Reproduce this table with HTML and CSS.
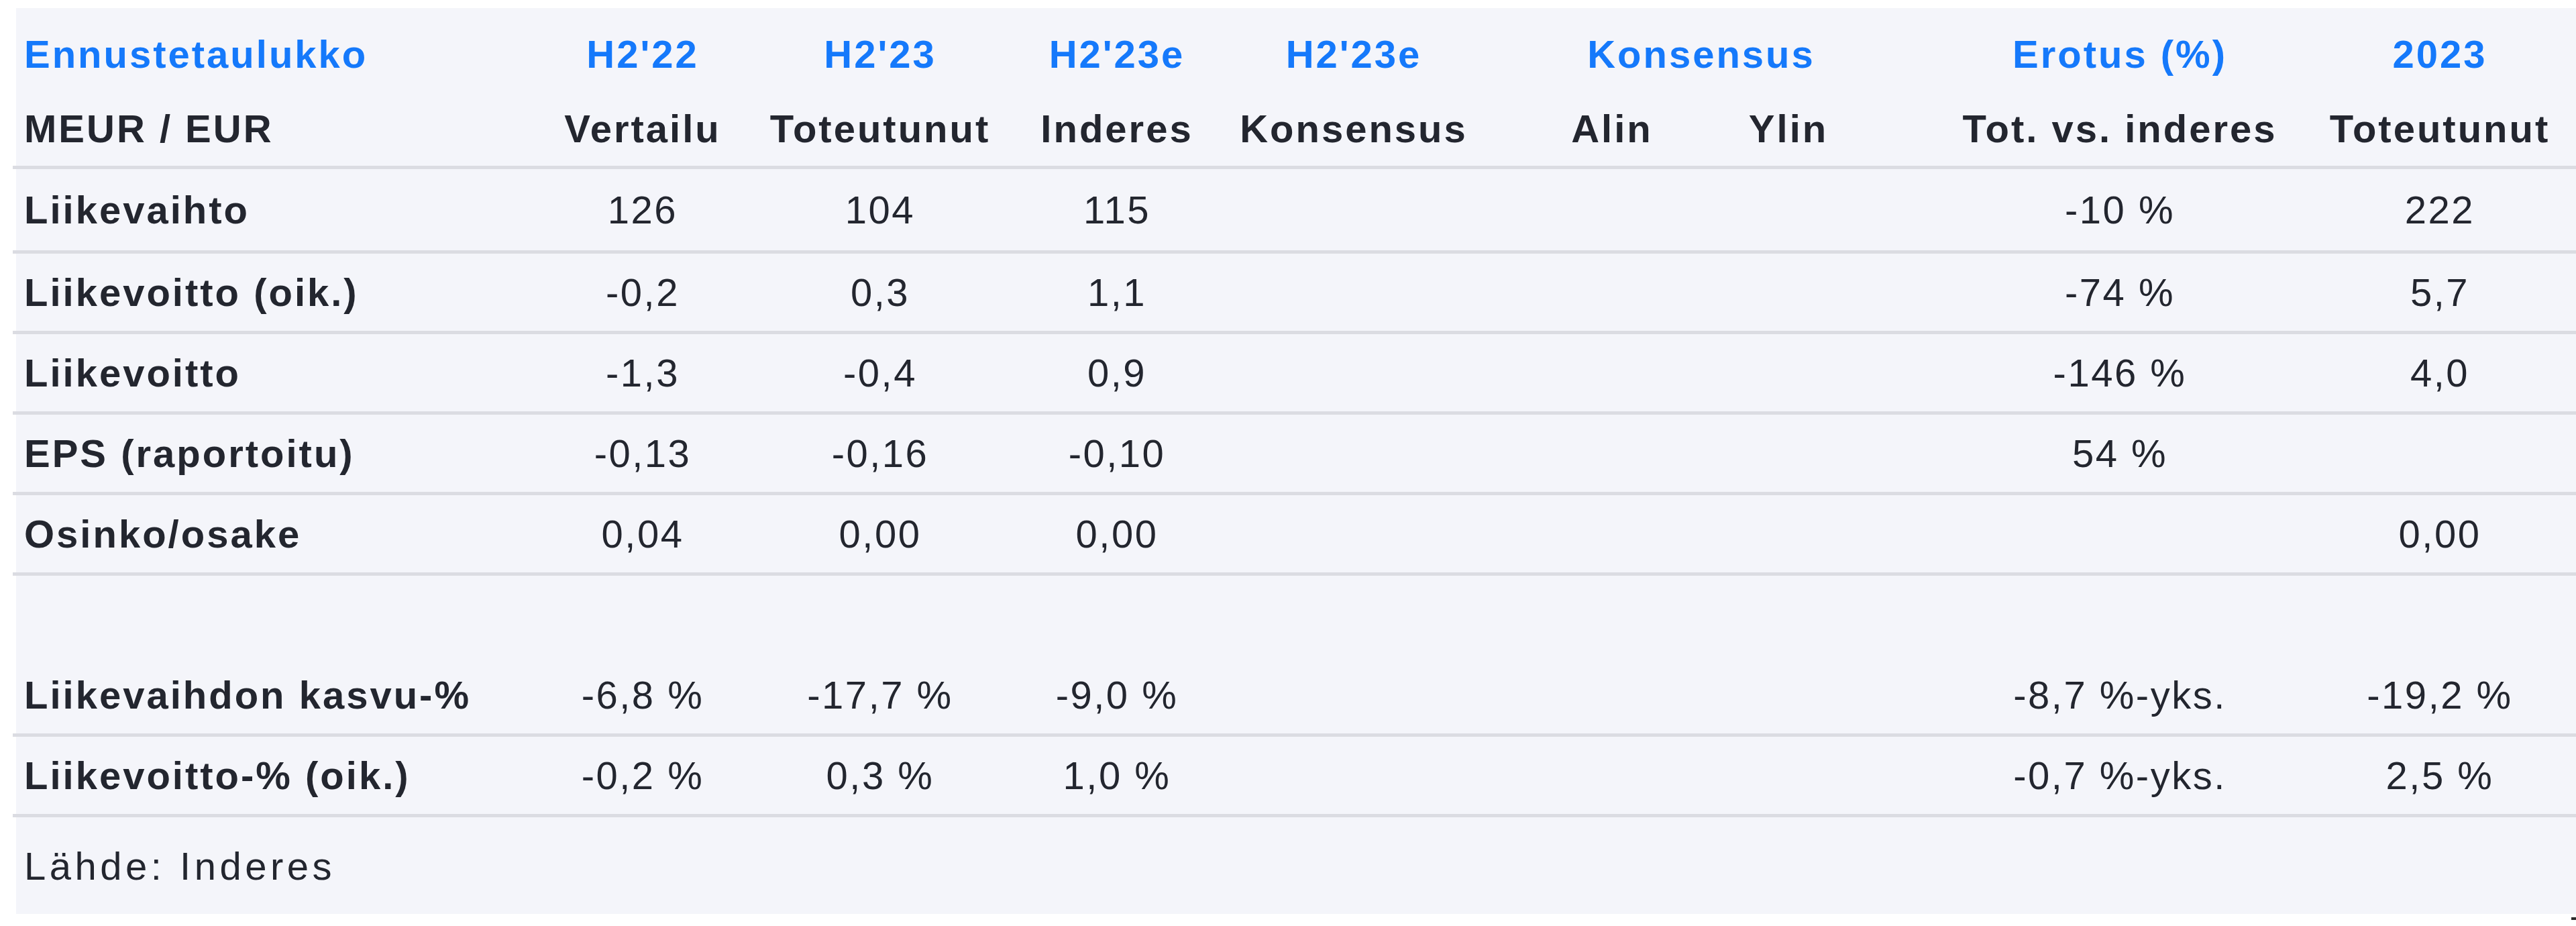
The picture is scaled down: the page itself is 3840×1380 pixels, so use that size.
FILE: index.html
```html
<!DOCTYPE html>
<html lang="fi">
<head>
<meta charset="utf-8">
<title>Ennustetaulukko</title>
<link rel="stylesheet" href="styles.css">
</head>
<body>
<div class="sheet">
  <div class="table">
    <div class="head">
      <div class="row head-top">
        <div class="cell label">Ennustetaulukko</div>
        <div class="cell">H2'22</div>
        <div class="cell">H2'23</div>
        <div class="cell">H2'23e</div>
        <div class="cell">H2'23e</div>
        <div class="cell span2">Konsensus</div>
        <div class="cell">Erotus (%)</div>
        <div class="cell">2023</div>
      </div>
      <div class="row head-sub">
        <div class="cell label">MEUR / EUR</div>
        <div class="cell">Vertailu</div>
        <div class="cell">Toteutunut</div>
        <div class="cell">Inderes</div>
        <div class="cell">Konsensus</div>
        <div class="cell">Alin</div>
        <div class="cell">Ylin</div>
        <div class="cell">Tot. vs. inderes</div>
        <div class="cell">Toteutunut</div>
      </div>
    </div>

    <div class="row data first">
      <div class="cell label">Liikevaihto</div>
      <div class="cell">126</div>
      <div class="cell">104</div>
      <div class="cell">115</div>
      <div class="cell"></div>
      <div class="cell"></div>
      <div class="cell"></div>
      <div class="cell">-10 %</div>
      <div class="cell">222</div>
    </div>
    <div class="row data">
      <div class="cell label">Liikevoitto (oik.)</div>
      <div class="cell">-0,2</div>
      <div class="cell">0,3</div>
      <div class="cell">1,1</div>
      <div class="cell"></div>
      <div class="cell"></div>
      <div class="cell"></div>
      <div class="cell">-74 %</div>
      <div class="cell">5,7</div>
    </div>
    <div class="row data">
      <div class="cell label">Liikevoitto</div>
      <div class="cell">-1,3</div>
      <div class="cell">-0,4</div>
      <div class="cell">0,9</div>
      <div class="cell"></div>
      <div class="cell"></div>
      <div class="cell"></div>
      <div class="cell">-146 %</div>
      <div class="cell">4,0</div>
    </div>
    <div class="row data">
      <div class="cell label">EPS (raportoitu)</div>
      <div class="cell">-0,13</div>
      <div class="cell">-0,16</div>
      <div class="cell">-0,10</div>
      <div class="cell"></div>
      <div class="cell"></div>
      <div class="cell"></div>
      <div class="cell">54 %</div>
      <div class="cell"></div>
    </div>
    <div class="row data">
      <div class="cell label">Osinko/osake</div>
      <div class="cell">0,04</div>
      <div class="cell">0,00</div>
      <div class="cell">0,00</div>
      <div class="cell"></div>
      <div class="cell"></div>
      <div class="cell"></div>
      <div class="cell"></div>
      <div class="cell">0,00</div>
    </div>
    <div class="row spacer"></div>
    <div class="row data">
      <div class="cell label">Liikevaihdon kasvu-%</div>
      <div class="cell">-6,8 %</div>
      <div class="cell">-17,7 %</div>
      <div class="cell">-9,0 %</div>
      <div class="cell"></div>
      <div class="cell"></div>
      <div class="cell"></div>
      <div class="cell">-8,7 %-yks.</div>
      <div class="cell">-19,2 %</div>
    </div>
    <div class="row data">
      <div class="cell label">Liikevoitto-% (oik.)</div>
      <div class="cell">-0,2 %</div>
      <div class="cell">0,3 %</div>
      <div class="cell">1,0 %</div>
      <div class="cell"></div>
      <div class="cell"></div>
      <div class="cell"></div>
      <div class="cell">-0,7 %-yks.</div>
      <div class="cell">2,5 %</div>
    </div>

    <div class="foot">Lähde: Inderes</div>
  </div>
  <div class="after"><span class="mark"></span></div>
</div>
</body>
</html>
```

FILE: styles.css
```css
html, body {
  margin: 0;
  padding: 0;
  background: #ffffff;
}

body {
  width: 3840px;
  height: 1380px;
  overflow: hidden;
  font-family: "Liberation Sans", Arial, sans-serif;
  font-size: 58px;
  color: #23262f;
}

.sheet {
  padding-top: 12px;
}

.table {
  margin-left: 19px;
  background: linear-gradient(to right, transparent 5px, #f4f5fa 5px);
}

.row {
  display: grid;
  grid-template-columns: 840px 198px 510px 196px 510px 260px 266px 722px 232px 1fr;
}

.cell {
  display: flex;
  align-items: center;
  justify-content: center;
  white-space: nowrap;
  min-width: 0;
}

.cell.label {
  justify-content: flex-start;
  padding-left: 17px;
}

.span2 {
  grid-column: span 2;
}

.head {
  padding-top: 14px;
  border-bottom: 5px solid #dbdce2;
  font-weight: bold;
  letter-spacing: 3px;
}

.head-top {
  height: 109px;
  color: #1579fb;
}

.head-sub {
  height: 112px;
  color: #23262f;
}

.data {
  height: 115px;
  border-bottom: 5px solid #dbdce2;
  letter-spacing: 2.5px;
}

.data.first {
  height: 121px;
}

.data .label {
  font-weight: bold;
  letter-spacing: 3px;
}

.spacer {
  height: 120px;
}

.foot {
  height: 144px;
  display: flex;
  align-items: center;
  padding-left: 17px;
  letter-spacing: 5.5px;
}

.after {
  display: flex;
  justify-content: flex-end;
  padding-top: 5px;
}

.mark {
  width: 7px;
  height: 4px;
  background: #2a2a2a;
}
```
